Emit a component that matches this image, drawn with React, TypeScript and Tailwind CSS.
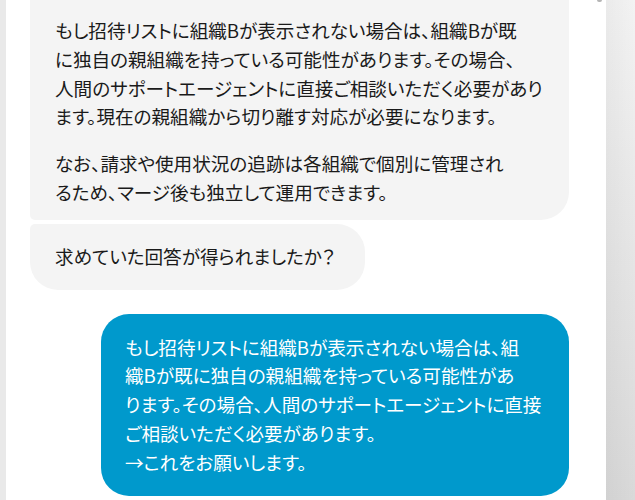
import React from "react";

const font = "font-['Noto_Sans_CJK_JP','Noto_Sans',sans-serif] [font-feature-settings:'palt']";

export default function App() {
  return (
    <div className={`flex h-[500px] w-[635px] overflow-hidden bg-white ${font}`}>
      {/* left edge */}
      <div className="w-[6px] shrink-0 bg-[#e9e9e9]" />

      {/* chat panel */}
      <div className="relative flex flex-1 flex-col pl-[24px] pr-[37px]">
        <div className="absolute right-[4px] top-0 h-[2px] w-[5px] rounded-b-full bg-[#b5b5b5]" />

        {/* assistant, continued */}
        <div className="rounded-bl-[5px] rounded-br-[28px] bg-[#f4f4f4] px-[25px] pb-[13px] pt-[16px] text-[18.6px] leading-[28.8px] text-[#1a1a1a]">
          <p className="whitespace-pre">
            {"もし招待リストに組織Bが表示されない場合は、組織Bが既\nに独自の親組織を持っている可能性があります。その場合、\n人間のサポートエージェントに直接ご相談いただく必要があり\nます。現在の親組織から切り離す対応が必要になります。"}
          </p>
          <p className="mt-[18px] whitespace-pre">
            {"なお、請求や使用状況の追跡は各組織で個別に管理され\nるため、マージ後も独立して運用できます。"}
          </p>
        </div>

        <div className="mt-[4px] w-[335px] rounded-bl-[28px] rounded-br-[28px] rounded-tl-[5px] rounded-tr-[28px] bg-[#f4f4f4] px-[25px] pb-[19px] pt-[18px] text-[18.6px] leading-[28.8px] text-[#1a1a1a]">
          求めていた回答が得られましたか？
        </div>

        {/* user */}
        <div className="ml-auto mt-[24px] w-[468px] rounded-[28px] bg-[#0099cc] px-[24px] pb-[19px] pt-[19px] text-[18.6px] leading-[28.8px] text-white">
          <p className="whitespace-pre">
            {"もし招待リストに組織Bが表示されない場合は、組\n織Bが既に独自の親組織を持っている可能性があ\nります。その場合、人間のサポートエージェントに直接\nご相談いただく必要があります。\n→これをお願いします。"}
          </p>
        </div>
      </div>

      {/* right edge */}
      <div className="relative w-[29px] shrink-0 bg-linear-to-b from-[#f3f3f3] to-[#d9d9d9]">
        <div className="absolute inset-0 bg-linear-to-r from-[rgba(0,0,0,0.035)] to-transparent" />
      </div>
    </div>
  );
}
